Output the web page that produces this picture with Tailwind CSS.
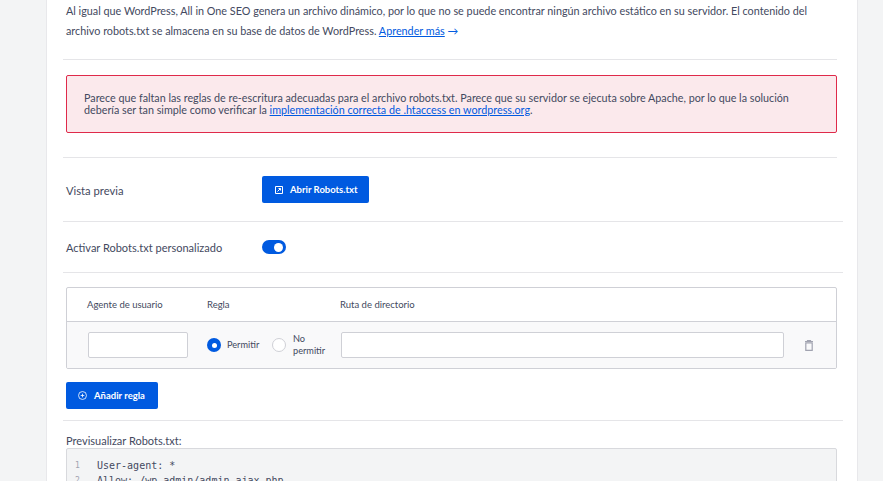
<!DOCTYPE html>
<html lang="es">
<head>
  <meta charset="UTF-8" />
  <title>Robots.txt</title>
  <script src="https://cdn.jsdelivr.net/npm/@tailwindcss/browser@4"></script>
</head>
<body class="bg-[#f3f4f5] h-[481px] overflow-hidden font-['Lato','Open_Sans',sans-serif] text-[#434960]">
  <div class="flex">
    <aside class="h-[481px] w-[46px] bg-[#f3f4f5]"></aside>
    <main class="w-[812px] h-[481px] overflow-hidden border-x border-[#e8e8eb] bg-white pl-[16px] pr-[14px]">
      <p class="pl-[3px] pt-[1px] text-[10.8px] leading-[20px] h-[59px] whitespace-nowrap">
        Al igual que WordPress, All in One SEO genera un archivo dinámico, por lo que no se puede encontrar ningún archivo estático en su servidor. El contenido del<br />
        archivo robots.txt se almacena en su base de datos de WordPress.
        <a class="text-[#005ae0] underline">Aprender más</a> <span class="text-[#005ae0]">→</span>
      </p>
      <div class="mr-[6px] border-t border-[#e5e5e8] pt-[15px] pb-[24px]">
        <div class="ml-[3px] h-[58px] rounded-[2px] border border-[#df2a4a] bg-[#fbe9ec] px-[17px] pt-[16px] text-[10.75px] leading-[12px] whitespace-nowrap">
          Parece que faltan las reglas de re-escritura adecuadas para el archivo robots.txt. Parece que su servidor se ejecuta sobre Apache, por lo que la solución<br />
          debería ser tan simple como verificar la
          <a class="text-[#005ae0] underline">implementación correcta de .htaccess en wordpress.org</a>.
        </div>
      </div>
      <div class="flex h-[64px] items-center border-t border-[#e5e5e8] pl-[3px] mr-[6px]">
        <span class="w-[196px] pt-[3px] text-[11.2px]">Vista previa</span>
        <button class="flex h-[27px] w-[107px] items-center gap-[7px] rounded-[2px] bg-[#005ae0] pl-[13px] text-[9.5px] font-bold text-white">
          <svg class="h-[8px] w-[8px]" viewBox="0 0 8 8" fill="none" stroke="currentColor" stroke-width="1"><path d="M.5.5h7v7h-7zM2.5 5.5l3-3M3.5 2.5h2v2"/></svg>
          <span class="pt-[2px]">Abrir Robots.txt</span>
        </button>
      </div>
      <div class="flex h-[51px] items-center border-t border-[#e5e5e8] pl-[3px]">
        <span class="w-[196px] pt-[2px] text-[11px]">Activar Robots.txt personalizado</span>
        <span class="flex h-[14px] w-[24px] items-center justify-end rounded-full bg-[#005ae0] pr-[3px]"><span class="h-[9px] w-[9px] rounded-full bg-white"></span></span>
      </div>
      <div class="border-t border-[#e5e5e8] pt-[14px]">
        <div class="ml-[3px] mr-[6px] overflow-hidden rounded-[2px] border border-[#cfd0d6]">
          <div class="flex h-[34px] items-center border-b border-[#cfd0d6] pt-[1px] text-[9.5px]">
            <span class="ml-[20px] w-[120px]">Agente de usuario</span>
            <span class="w-[133px]">Regla</span>
            <span>Ruta de directorio</span>
          </div>
          <div class="flex h-[46px] items-center bg-[#f9f9fa] text-[9.2px]">
            <input class="ml-[21px] h-[26px] w-[100px] rounded-[2px] border border-[#cfd0d6] bg-white" />
            <span class="ml-[19px] flex h-[14px] w-[14px] items-center justify-center rounded-full bg-[#005ae0]"><span class="h-[5px] w-[5px] rounded-full bg-white"></span></span>
            <span class="ml-[6px] w-[45px]">Permitir</span>
            <span class="h-[14px] w-[14px] rounded-full border border-[#cfd0d6] bg-white"></span>
            <span class="ml-[7px] w-[36px] leading-[12px]">No permitir</span>
            <input class="ml-[12px] h-[26px] w-[443px] rounded-[2px] border border-[#cfd0d6] bg-white" />
            <svg class="ml-[21px] h-[11px] w-[8px] text-[#a1a3b0]" viewBox="0 0 8 11" fill="none" stroke="currentColor" stroke-width="1.2"><path d="M0 1.5h8M2.5 1.5V.6h3v.9M.8 2.8h6.4v7.6H.8z"/></svg>
          </div>
        </div>
        <button class="mt-[13px] ml-[3px] flex h-[27px] w-[92px] items-center gap-[7px] rounded-[2px] bg-[#005ae0] pl-[12px] text-[9.5px] font-bold text-white">
          <svg class="h-[9px] w-[9px]" viewBox="0 0 10 10" fill="none" stroke="currentColor" stroke-width="0.9"><circle cx="5" cy="5" r="4.4"/><path d="M5 3v4M3 5h4"/></svg>
          <span class="pt-[1px]">Añadir regla</span>
        </button>
      </div>
      <div class="mt-[11px] border-t border-[#e5e5e8] pl-[3px] pt-[13px]">
        <p class="text-[11px] leading-[14px]">Previsualizar Robots.txt:</p>
        <div class="mr-[6px] h-[40px] rounded-[2px] border border-[#d8d9dd] bg-[#f3f4f5] pt-[9px] font-['DejaVu_Sans_Mono',monospace] text-[10px] leading-[15px]">
          <div class="flex"><span class="w-[30px] pl-[8px] text-[8px] text-[#a1a3b0]">1</span><span>User-agent: *</span></div>
          <div class="flex"><span class="w-[30px] pl-[8px] text-[8px] text-[#a1a3b0]">2</span><span>Allow: /wp-admin/admin-ajax.php</span></div>
        </div>
      </div>
    </main>
    <aside class="h-[481px] flex-1 bg-[#f3f4f5]"></aside>
  </div>
</body>
</html>
